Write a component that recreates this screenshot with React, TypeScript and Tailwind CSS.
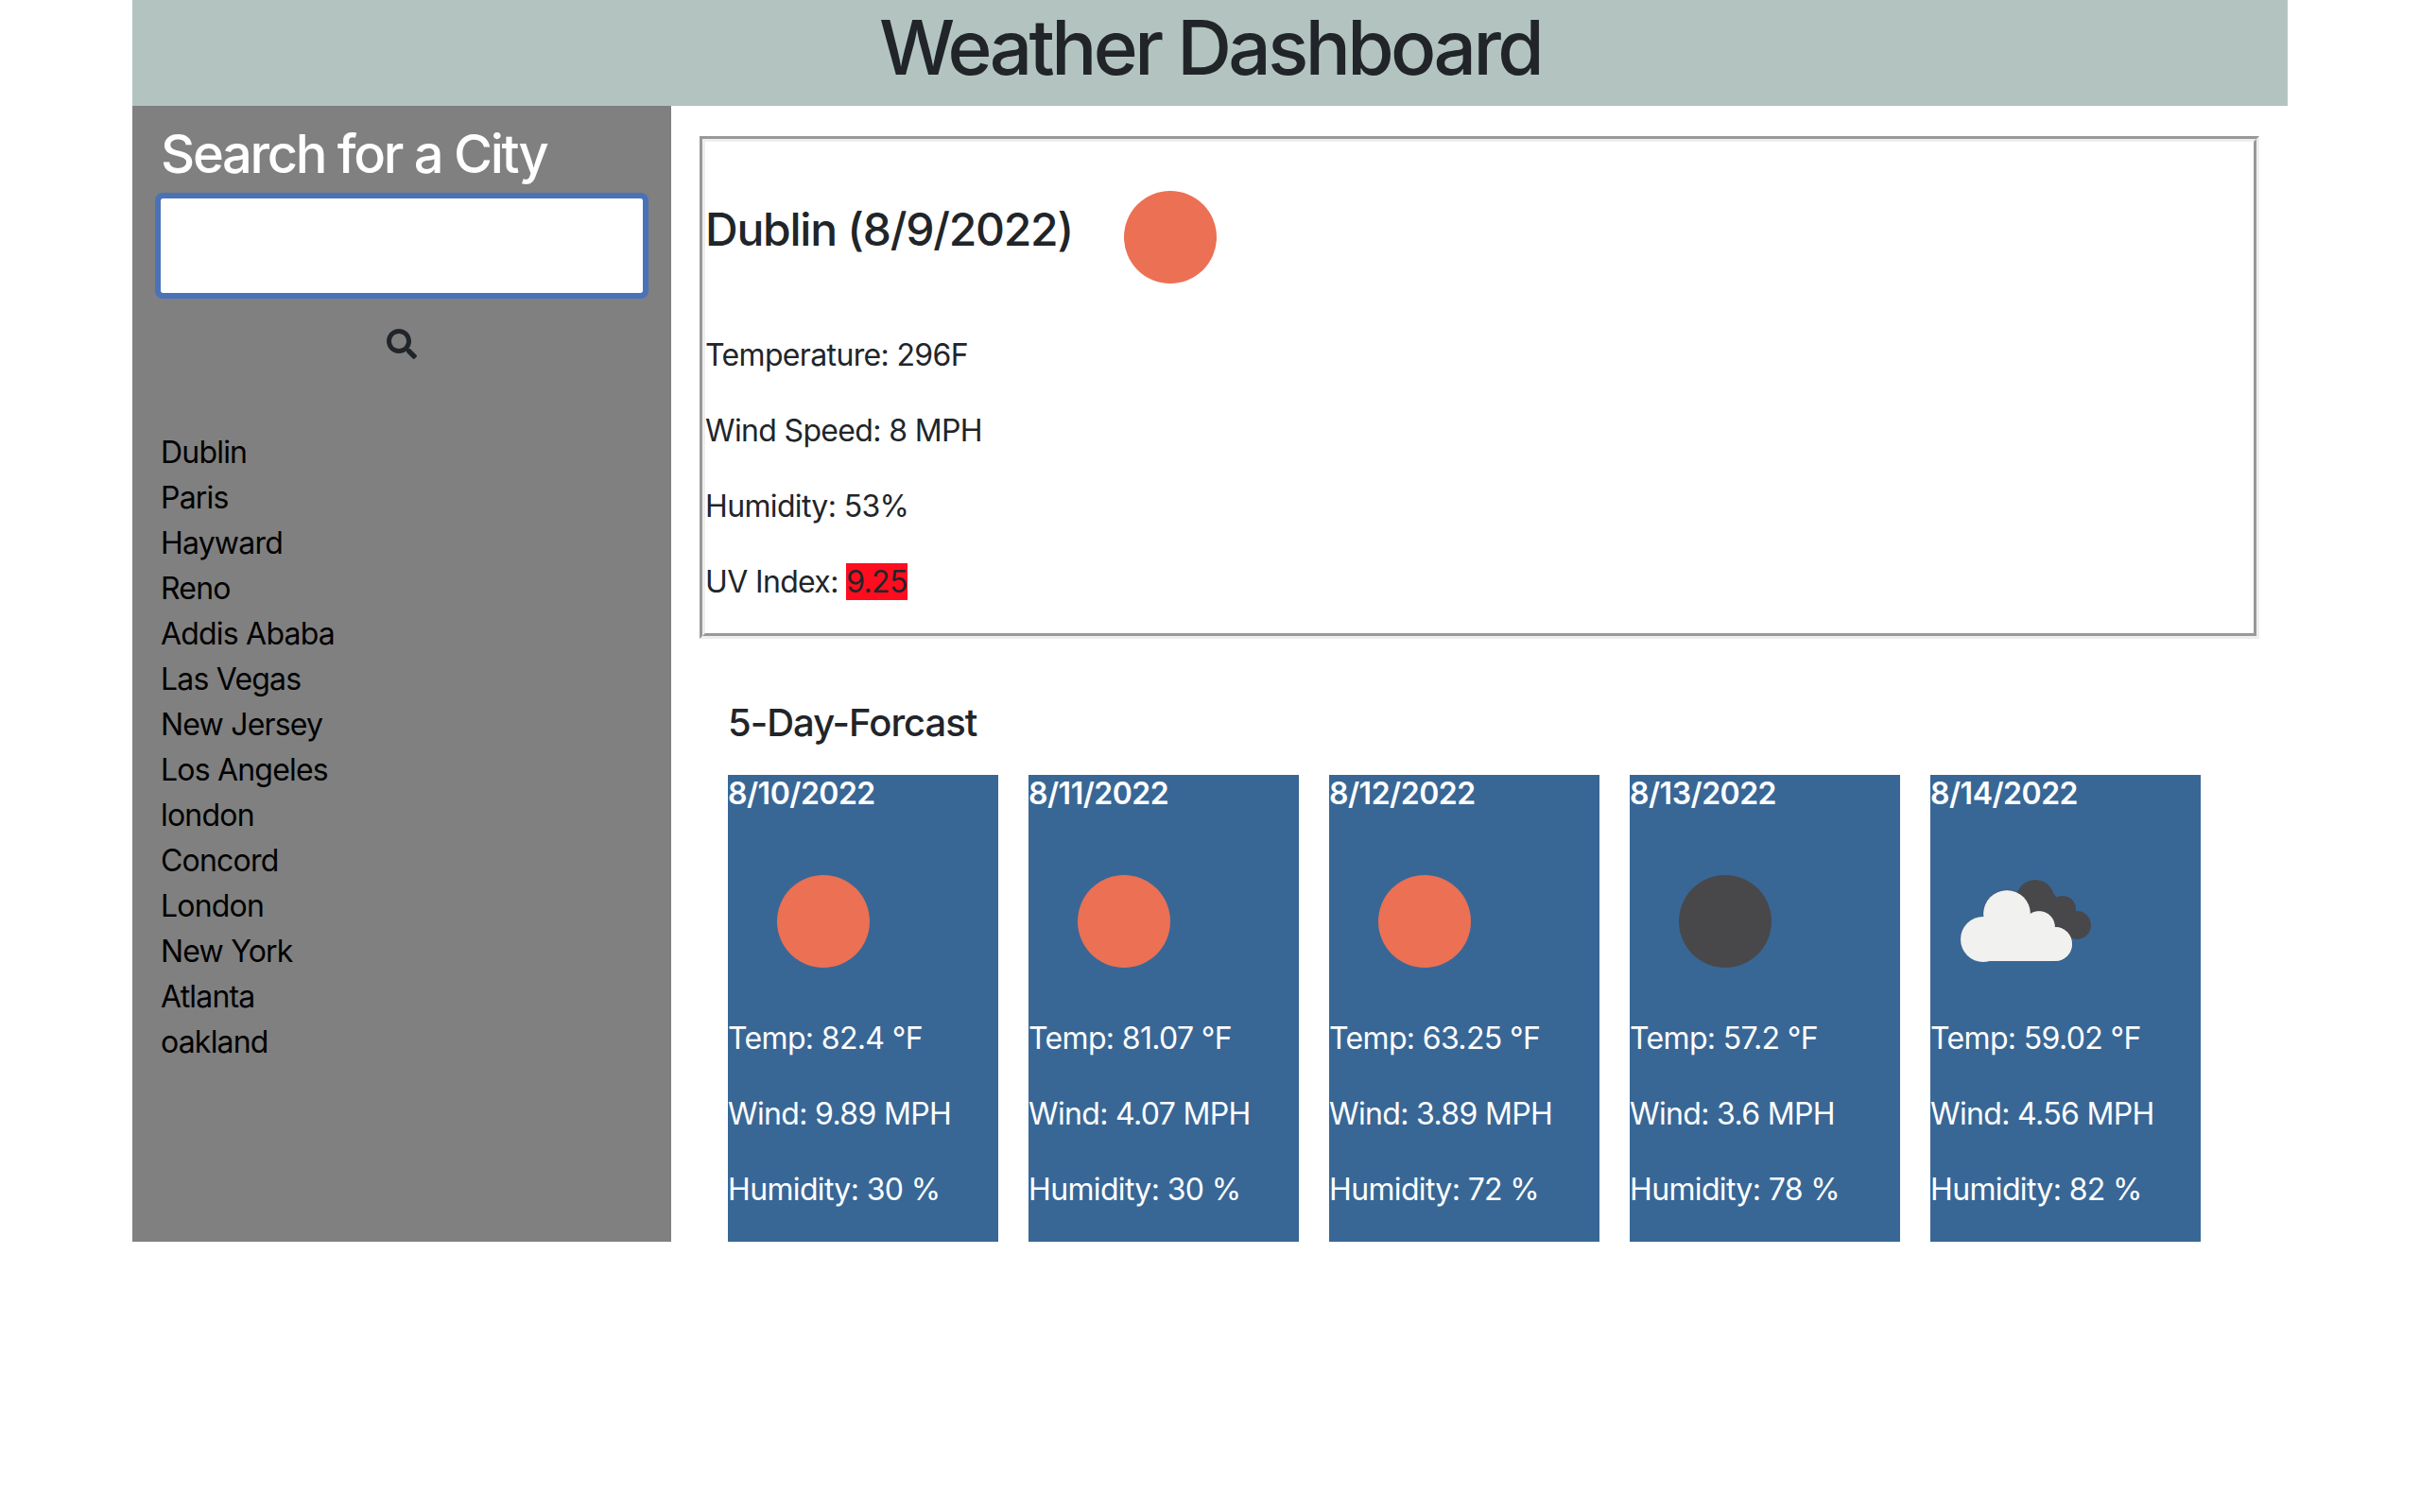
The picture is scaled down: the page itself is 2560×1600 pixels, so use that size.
import { FaSearch } from 'react-icons/fa'

const cities = [
  'Dublin',
  'Paris',
  'Hayward',
  'Reno',
  'Addis Ababa',
  'Las Vegas',
  'New Jersey',
  'Los Angeles',
  'london',
  'Concord',
  'London',
  'New York',
  'Atlanta',
  'oakland'
]

type Icon = 'sun' | 'moon' | 'clouds'

const forecast: { date: string; icon: Icon; temp: string; wind: string; humidity: string }[] = [
  { date: '8/10/2022', icon: 'sun', temp: '82.4', wind: '9.89', humidity: '30' },
  { date: '8/11/2022', icon: 'sun', temp: '81.07', wind: '4.07', humidity: '30' },
  { date: '8/12/2022', icon: 'sun', temp: '63.25', wind: '3.89', humidity: '72' },
  { date: '8/13/2022', icon: 'moon', temp: '57.2', wind: '3.6', humidity: '78' },
  { date: '8/14/2022', icon: 'clouds', temp: '59.02', wind: '4.56', humidity: '82' }
]

function WeatherIcon({ icon }: { icon: Icon }) {
  return (
    <svg viewBox="0 0 200 200" className="w-[200px] h-[200px] shrink-0">
      {icon === 'sun' && <circle cx="101" cy="100" r="49" fill="#eb7054" />}
      {icon === 'moon' && <circle cx="101" cy="100" r="49" fill="#48484a" />}
      {icon === 'clouds' && (
        <>
          <g fill="#48484a">
            <circle cx="111" cy="76" r="20" />
            <circle cx="140" cy="87" r="14" />
            <circle cx="155" cy="104" r="15" />
            <path d="M100 90 L130 70 L150 95 L150 118 L120 118 Z" />
          </g>
          <g fill="#f1f1ef" stroke="#33373b" strokeWidth="0.8" strokeOpacity="0.5">
            <circle cx="81" cy="92" r="25" />
            <circle cx="115" cy="106" r="17" />
            <circle cx="132" cy="124" r="18" />
          </g>
          <g fill="#f1f1ef">
            <circle cx="56" cy="119" r="24" />
            <circle cx="81" cy="92" r="24.6" />
            <circle cx="115" cy="106" r="16.6" />
            <circle cx="132" cy="124" r="18" />
            <path d="M56 142 L132 142 L132 106 L100 95 L60 100 Z" />
          </g>
        </>
      )}
    </svg>
  )
}

export default function App() {
  return (
    <div className="min-h-[1600px] bg-white px-[140px] font-['Inter','Liberation_Sans',sans-serif] text-[32px] leading-[48px] tracking-[-0.65px] text-[#212529]">
      <header className="h-[112px] bg-[#b3c4c0] text-center pt-[2px]">
        <h1 className="text-[80px] leading-[96px] tracking-[-3.6px] font-medium">Weather Dashboard</h1>
      </header>

      <div className="flex">
        <aside className="w-[570px] h-[1202px] shrink-0 bg-[#808080] px-[30px]">
          <h2 className="text-[56px] leading-[67px] mt-[18px] mb-[13px] tracking-[-2.3px] font-medium text-white">Search for a City</h2>
          <input
            type="text"
            aria-label="Search for a City"
            className="block w-[510px] h-[100px] bg-white rounded-[2px] outline-[6px] outline-solid outline-[#4a72b8]"
          />
          <button type="button" className="flex w-full justify-center pt-[38px] text-[#212529]">
            <FaSearch className="w-[32px] h-[32px]" />
          </button>
          <ul className="mt-[75px] tracking-[-0.8px] text-black">
            {cities.map((city, i) => (
              <li key={i}>{city}</li>
            ))}
          </ul>
        </aside>

        <main className="flex-1 px-[30px] pt-[32px]">
          <section className="h-[532px] border-[3px] border-t-[#999999] border-l-[#999999] border-r-[#eeeeee] border-b-[#eeeeee]">
            <div className="h-full border-[3px] border-t-[#eeeeee] border-l-[#eeeeee] border-r-[#999999] border-b-[#999999]">
              <div className="flex items-center pt-[1px] mb-[1px]">
                <h3 className="text-[48px] leading-[58px] mb-[16px] mr-[2px] tracking-[-1.25px] font-medium">Dublin (8/9/2022)</h3>
                <WeatherIcon icon="sun" />
              </div>
              <p className="mb-[32px]">Temperature: 296F</p>
              <p className="mb-[32px]">Wind Speed: 8 MPH</p>
              <p className="mb-[32px]">Humidity: 53%</p>
              <p>
                UV Index: <span className="bg-[#ff0d1f]">9.25</span>
              </p>
            </div>
          </section>

          <section className="pl-[30px] pt-[65px]">
            <h5 className="text-[40px] leading-[48px] mb-[31px] tracking-[-1px] font-medium">5-Day-Forcast</h5>
            <div className="flex gap-[32px]">
              {forecast.map(day => (
                <div key={day.date} className="w-[286px] h-[494px] bg-[#386796] text-white">
                  <div className="font-semibold leading-[39px] mb-[16px] tracking-[-0.5px]">{day.date}</div>
                  <WeatherIcon icon={day.icon} />
                  <p className="mb-[32px]">Temp: {day.temp} °F</p>
                  <p className="mb-[32px]">Wind: {day.wind} MPH</p>
                  <p>Humidity: {day.humidity} %</p>
                </div>
              ))}
            </div>
          </section>
        </main>
      </div>
    </div>
  )
}
